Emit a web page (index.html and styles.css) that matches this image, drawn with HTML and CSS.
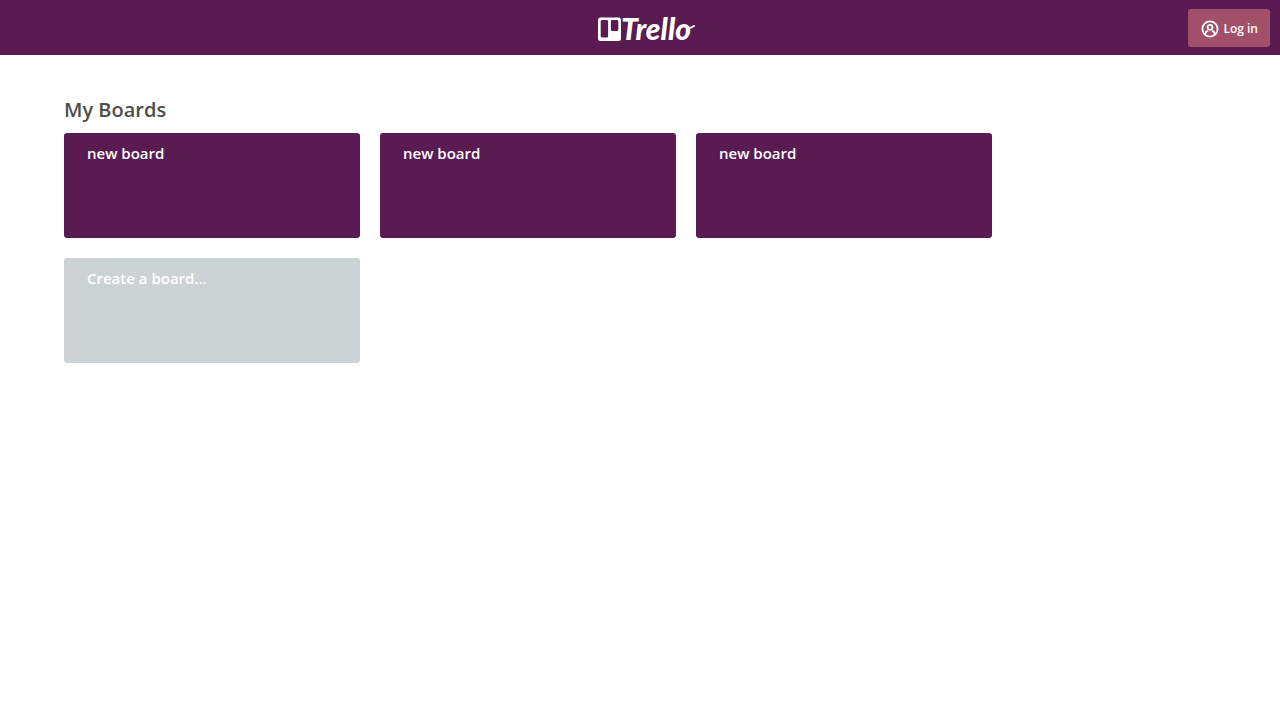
FILE: index.html
```html
<!DOCTYPE html>
<html lang="en">
<head>
<meta charset="utf-8">
<meta name="viewport" content="width=device-width, initial-scale=1">
<title>My Boards | Trello</title>
<link rel="stylesheet" href="styles.css">
</head>
<body>
<header class="topbar">
  <a class="logo" href="#" aria-label="Trello">
    <svg width="98" height="32" viewBox="0 0 98 32" aria-hidden="true">
      <path class="logo-mark" fill-rule="evenodd" d="M3.500 5.500H21.500Q24 5.500 24 8V26.500Q24 29 21.500 29H3.500Q1 29 1 26.500V8Q1 5.500 3.500 5.500ZM5 8Q3.700 8 3.700 9.300V24.200Q3.700 25.500 5 25.500H9.800Q11.100 25.500 11.100 24.200V9.300Q11.100 8 9.800 8ZM15.200 8Q13.900 8 13.900 9.300V17.700Q13.900 19 15.200 19H20Q21.300 19 21.300 17.700V9.300Q21.300 8 20 8Z"/>
      <text class="logo-text" x="24" y="28">Trello</text>
      <path class="logo-tail" d="M91 16Q94 16 97 14"/>
    </svg>
  </a>
  <button class="login" type="button">
    <svg class="login-icon" width="18" height="18" viewBox="0 0 18 18" aria-hidden="true">
      <circle cx="9" cy="9" r="7.6"/>
      <circle cx="9" cy="7.3" r="2.5"/>
      <path d="M4.200 14.700V13.600Q4.600 11.200 7.200 10.800M13.800 14.700V13.600Q13.400 11.200 10.800 10.800"/>
    </svg>
    <span>Log in</span>
  </button>
</header>
<main class="boards">
  <h1 class="boards-title">My Boards</h1>
  <div class="board-list">
    <a class="board" href="#">new board</a>
    <a class="board" href="#">new board</a>
    <a class="board" href="#">new board</a>
    <button class="board board-create" type="button">Create a board...</button>
  </div>
</main>
</body>
</html>
```
FILE: styles.css
```css
* {
  box-sizing: border-box;
}

body {
  margin: 0;
  background: #fff;
  color: #4d4d4d;
  font-family: "Open Sans", "Noto Sans", sans-serif;
}

.topbar {
  display: grid;
  grid-template-columns: 1fr auto 1fr;
  align-items: center;
  min-height: 55px;
  padding: 1px 10px 0;
  background: #591b52;
}

.logo {
  grid-column: 2;
  display: block;
  padding-left: 12px;
}

.logo svg {
  display: block;
  overflow: visible;
}

.logo-mark,
.logo-text {
  fill: #fff;
}

.logo-text {
  font: italic 900 30px Lato, sans-serif;
}

.logo-tail {
  fill: none;
  stroke: #fff;
  stroke-width: 2;
  stroke-linecap: round;
}

.login {
  justify-self: end;
  display: flex;
  align-items: center;
  gap: 4px;
  padding: 11px 12px 9px 13px;
  border: 0;
  border-radius: 3px;
  background: #a24f69;
  color: #fff;
  font: 600 12px/18px "Open Sans", sans-serif;
  cursor: pointer;
}

.login-icon {
  fill: none;
  stroke: #fff;
  stroke-width: 1.7;
}

.boards {
  padding: 40px 5%;
}

.boards-title {
  margin: 0 0 8px;
  font-size: 20px;
  font-weight: 600;
  line-height: 30px;
}

.board-list {
  display: grid;
  grid-template-columns: repeat(auto-fill, minmax(296px, max-content));
  gap: 20px;
  max-width: 928px;
}

.board {
  display: flex;
  align-items: flex-start;
  min-height: 105px;
  padding: 10px 23px;
  border: 0;
  border-radius: 3px;
  background: #591b52;
  color: #fff;
  font: 600 15px/20px "Open Sans", sans-serif;
  text-align: left;
  text-decoration: none;
  cursor: pointer;
}

.board-create {
  background: #cdd2d5;
}
```
